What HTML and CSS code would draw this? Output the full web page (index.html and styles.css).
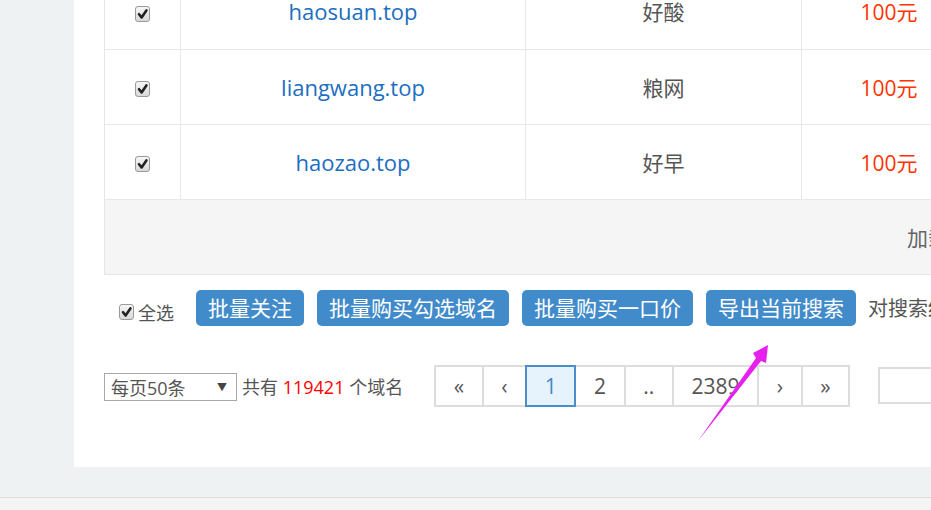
FILE: index.html
```html
<!DOCTYPE html>
<html lang="zh-CN">
<head>
<meta charset="utf-8">
<title>域名列表</title>
<link rel="stylesheet" href="styles.css">
</head>
<body>
<div class="page">
  <main class="panel">
    <table class="grid">
      <colgroup>
        <col class="c-check"><col class="c-domain"><col class="c-mean"><col class="c-price"><col class="c-rest">
      </colgroup>
      <tbody>
        <tr>
          <td><span class="cb"><svg viewBox="0 0 13 14" width="13" height="14"><path d="M3 7.2 L5.6 10.4 L10.4 3.4" fill="none" stroke="#222" stroke-width="2.6" stroke-linecap="round" stroke-linejoin="round"/></svg></span></td>
          <td><a class="domain" href="#">haosuan.top</a></td>
          <td class="mean">好酸</td>
          <td class="price">100元</td>
          <td></td>
        </tr>
        <tr>
          <td><span class="cb"><svg viewBox="0 0 13 14" width="13" height="14"><path d="M3 7.2 L5.6 10.4 L10.4 3.4" fill="none" stroke="#222" stroke-width="2.6" stroke-linecap="round" stroke-linejoin="round"/></svg></span></td>
          <td><a class="domain" href="#">liangwang.top</a></td>
          <td class="mean">粮网</td>
          <td class="price">100元</td>
          <td></td>
        </tr>
        <tr>
          <td><span class="cb"><svg viewBox="0 0 13 14" width="13" height="14"><path d="M3 7.2 L5.6 10.4 L10.4 3.4" fill="none" stroke="#222" stroke-width="2.6" stroke-linecap="round" stroke-linejoin="round"/></svg></span></td>
          <td><a class="domain" href="#">haozao.top</a></td>
          <td class="mean">好早</td>
          <td class="price">100元</td>
          <td></td>
        </tr>
        <tr class="more">
          <td colspan="5">加载更多</td>
        </tr>
      </tbody>
    </table>

    <div class="actions">
      <label class="select-all"><span class="cb cb-small"><svg viewBox="0 0 13 14" width="13" height="14"><path d="M3 7.2 L5.6 10.4 L10.4 3.4" fill="none" stroke="#222" stroke-width="2.6" stroke-linecap="round" stroke-linejoin="round"/></svg></span>全选</label>
      <button class="btn">批量关注</button>
      <button class="btn">批量购买勾选域名</button>
      <button class="btn">批量购买一口价</button>
      <button class="btn">导出当前搜索</button>
      <span class="hint">对搜索结果进行批量操作</span>
    </div>

    <div class="pager-row">
      <div class="select"><span>每页50条</span><span class="caret">▼</span></div>
      <span class="total">共有 <em>119421</em> 个域名</span>
      <ul class="pager">
        <li><a href="#">«</a></li>
        <li><a href="#">‹</a></li>
        <li class="active"><a href="#">1</a></li>
        <li><a href="#">2</a></li>
        <li><a href="#">..</a></li>
        <li><a href="#">2389</a></li>
        <li><a href="#">›</a></li>
        <li><a href="#">»</a></li>
      </ul>
      <input class="goto" type="text">
    </div>
  </main>
  <footer class="footer"></footer>
</div>
<svg class="annot" viewBox="0 0 931 510" width="931" height="510">
  <polygon points="698,441 756,358 753,353 768,345 766,363 761,361" fill="#e620ef"/>
</svg>
</body>
</html>
```

FILE: styles.css
```css
html, body {
  margin: 0;
  padding: 0;
  overflow: hidden;
}

body {
  width: 931px;
  height: 510px;
  position: relative;
  background: #eef2f3;
  font-family: "Open Sans", "Noto Sans CJK SC", sans-serif;
  color: #555;
}

.page {
  display: flex;
  flex-direction: column;
  height: 510px;
}

.panel {
  margin-left: 74px;
  background: #fff;
  padding: 0 0 60px 30px;
  overflow: hidden;
}

.grid {
  width: 1690px;
  border-collapse: collapse;
  table-layout: fixed;
  margin-top: -26px;
  border-left: 1px solid #e6e6e6;
}

.c-check { width: 76px; }
.c-domain { width: 345px; }
.c-mean { width: 276px; }
.c-price { width: 175px; }

.grid tr {
  height: 75px;
}

.grid td {
  border-bottom: 1px solid #e8e8e8;
  border-right: 1px solid #e8e8e8;
  text-align: center;
  vertical-align: middle;
  font-size: 21px;
  padding: 0;
}

.domain {
  color: #1b6ec2;
  text-decoration: none;
  font-size: 22px;
}

.mean {
  color: #555;
}

.price {
  color: #ff3300;
}

.more td {
  background: #f5f5f5;
  color: #666;
}

.cb {
  display: inline-flex;
  box-sizing: border-box;
  width: 15px;
  height: 16px;
  border: 1px solid #9a9a9a;
  border-radius: 3px;
  background: linear-gradient(#f6f6f6, #d9d9d9);
  align-items: center;
  justify-content: center;
  vertical-align: middle;
}

.cb svg {
  display: block;
}

.actions {
  display: flex;
  align-items: center;
  gap: 13px;
  margin-top: 15px;
  padding-left: 15px;
  height: 36px;
  white-space: nowrap;
}

.select-all {
  display: flex;
  align-items: center;
  gap: 4px;
  font-size: 18px;
  color: #555;
  margin-right: 9px;
  margin-top: 9px;
  flex-shrink: 0;
}

.btn {
  flex-shrink: 0;
  height: 36px;
  padding: 0 12px;
  border: none;
  border-radius: 5px;
  background: #428bca;
  color: #fff;
  font-family: inherit;
  font-size: 21px;
  line-height: 36px;
}

.hint {
  flex-shrink: 0;
  font-size: 20px;
  color: #555;
  margin-left: -1px;
}

.pager-row {
  display: flex;
  align-items: center;
  margin-top: 39px;
  height: 42px;
  white-space: nowrap;
}

.select {
  flex-shrink: 0;
  box-sizing: border-box;
  width: 133px;
  height: 28px;
  border: 1px solid #a9a9a9;
  display: flex;
  align-items: center;
  justify-content: space-between;
  padding: 0 9px 0 6px;
  font-size: 18px;
  color: #555;
  margin-top: 2px;
}

.caret {
  font-size: 10px;
  color: #444;
}

.total {
  flex-shrink: 0;
  font-size: 18px;
  color: #555;
  margin-left: 5px;
}

.total em {
  font-style: normal;
  color: #ff0000;
}

.pager {
  flex-shrink: 0;
  display: flex;
  list-style: none;
  margin: 0 0 0 31px;
  padding: 0;
}

.pager li {
  margin-left: -2px;
}

.pager li:first-child {
  margin-left: 0;
}

.pager a {
  display: block;
  box-sizing: border-box;
  height: 42px;
  line-height: 38px;
  padding: 0 17.6px;
  border: 2px solid #dddddd;
  background: #fff;
  color: #555;
  font-size: 21px;
  text-decoration: none;
}

.pager .active a {
  position: relative;
  background: #e6f3fc;
  border-color: #4a8fc9;
  color: #428bca;
}

.goto {
  flex-shrink: 0;
  box-sizing: border-box;
  width: 90px;
  height: 37px;
  margin-left: 28px;
  border: 2px solid #dddddd;
}

.footer {
  margin-top: 30px;
  flex: 1;
  border-top: 1px solid #dcdcdc;
  background: #f4f4f4;
}

.annot {
  position: absolute;
  left: 0;
  top: 0;
  pointer-events: none;
}
```
